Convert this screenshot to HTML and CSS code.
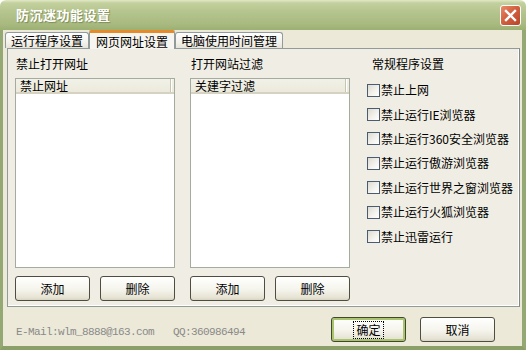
FILE: index.html
```html
<!DOCTYPE html>
<html lang="zh-CN">
<head>
    <meta charset="UTF-8">
    <title>防沉迷功能设置</title>
    <link rel="stylesheet" href="styles.css">
</head>
<body>
    <div class="window">
        <div class="titlebar">
            <span class="title">防沉迷功能设置</span>
            <div class="close-btn">
                <svg width="13" height="13" viewBox="0 0 13 13">
                    <path d="M2 2 L11 11 M11 2 L2 11" stroke="#fff" stroke-width="2.4" stroke-linecap="square"/>
                </svg>
            </div>
        </div>
        <div class="frame">
            <div class="tabs">
                <div class="tab">运行程序设置</div>
                <div class="tab active">网页网址设置</div>
                <div class="tab">电脑使用时间管理</div>
            </div>
            <div class="panel">
                <div class="col">
                    <div class="label">禁止打开网址</div>
                    <div class="listbox">
                        <div class="list-header"><span class="list-col">禁止网址</span></div>
                    </div>
                    <div class="btn-row">
                        <div class="btn">添加</div>
                        <div class="btn">删除</div>
                    </div>
                </div>
                <div class="col">
                    <div class="label">打开网站过滤</div>
                    <div class="listbox">
                        <div class="list-header"><span class="list-col">关建字过滤</span></div>
                    </div>
                    <div class="btn-row">
                        <div class="btn">添加</div>
                        <div class="btn">删除</div>
                    </div>
                </div>
                <div class="options">
                    <div class="label opt-label">常规程序设置</div>
                    <label class="check"><span class="box"></span>禁止上网</label>
                    <label class="check"><span class="box"></span>禁止运行IE浏览器</label>
                    <label class="check"><span class="box"></span>禁止运行360安全浏览器</label>
                    <label class="check"><span class="box"></span>禁止运行傲游浏览器</label>
                    <label class="check"><span class="box"></span>禁止运行世界之窗浏览器</label>
                    <label class="check"><span class="box"></span>禁止运行火狐浏览器</label>
                    <label class="check"><span class="box"></span>禁止迅雷运行</label>
                </div>
            </div>
            <div class="footer">
                <span class="info">E-Mail:wlm_8888@163.com</span>
                <span class="info qq">QQ:360986494</span>
                <div class="btn default"><span class="focus">确定</span></div>
                <div class="btn cancel">取消</div>
            </div>
        </div>
    </div>
</body>
</html>
```

FILE: styles.css
```css
* {
    margin: 0;
    padding: 0;
    box-sizing: border-box;
}

body {
    font-family: "Noto Sans CJK SC", "Liberation Sans", sans-serif;
    font-size: 12px;
    line-height: 14px;
    color: #000;
    background: #fff;
}

.window {
    width: 526px;
    height: 350px;
    display: flex;
    flex-direction: column;
}

.titlebar {
    height: 30px;
    display: flex;
    align-items: center;
    justify-content: space-between;
    padding: 0 5px 0 16px;
    background: linear-gradient(#e2e9c6 0, #c3d09e 3px, #b3c38c 45%, #a9ba80 80%, #9cb072 100%);
    border-radius: 6px 6px 0 0;
}

.title {
    color: #fff;
    font-weight: bold;
    font-size: 13px;
    letter-spacing: 0.5px;
    text-shadow: 1px 1px 1px #7c8c5a;
}

.close-btn {
    width: 21px;
    height: 21px;
    border: 1px solid #fff;
    border-radius: 3px;
    background: linear-gradient(135deg, #e88b6c 0, #d2613f 45%, #b9442a 100%);
    display: flex;
    align-items: center;
    justify-content: center;
}

.frame {
    flex: 1;
    background: #ece9d8;
    border-left: 3px solid #93a872;
    border-right: 4px solid #93a872;
    border-bottom: 4px solid #8aa068;
    display: flex;
    flex-direction: column;
}

.tabs {
    display: flex;
    align-items: flex-end;
    height: 18px;
    margin-left: 2px;
    position: relative;
    z-index: 1;
}

.tab {
    height: 16px;
    line-height: 15px;
    padding: 0 5px;
    border: 1px solid #919b9c;
    border-bottom: none;
    border-radius: 3px 3px 0 0;
    background: linear-gradient(#fefefe, #f3f2ec 60%, #e6e4da);
    margin-right: -1px;
}

.tab.active {
    height: 19px;
    margin-bottom: -1px;
    padding: 0 6px;
    line-height: 17px;
    background: #f6f5ef;
    border-top: 3px solid #e68b2c;
    border-radius: 2px 2px 0 0;
    margin-left: 1px;
    margin-right: 0;
}

.panel {
    height: 259px;
    margin: 0 2px 0 4px;
    border: 1px solid #919b9c;
    border-right: 1px solid #7f8788;
    box-shadow: inset -1px -1px 0 #fff;
    background: #f0eee4;
    display: flex;
    padding-left: 7px;
}

.col {
    width: 160px;
    margin-right: 15px;
    display: flex;
    flex-direction: column;
}

.label {
    margin-top: 8px;
    margin-left: 1px;
    height: 14px;
}

.listbox {
    margin-top: 7px;
    height: 190px;
    border: 1px solid #a5ac9f;
    background: #fff;
}

.list-header {
    height: 15px;
    background: linear-gradient(#f2f1e8, #ebeadb);
    border-bottom: 2px solid #d6d2c2;
    display: flex;
}

.list-col {
    width: 155px;
    padding-left: 4px;
    line-height: 13px;
    border-right: 1px solid #c7c5b2;
    box-shadow: 1px 0 0 #fff;
}

.btn-row {
    display: flex;
    justify-content: space-between;
    margin-top: 8px;
}

.btn {
    width: 75px;
    height: 25px;
    border: 1px solid #4d4d40;
    border-radius: 3px;
    background: linear-gradient(#ffffff, #f5f4ec 55%, #e6e3d4 90%, #d8d4c0);
    display: flex;
    align-items: center;
    justify-content: center;
}

.options {
    margin-left: 2px;
    display: flex;
    flex-direction: column;
}

.opt-label {
    margin-left: 5px;
    margin-bottom: 7px;
}

.check {
    height: 24.4px;
    display: flex;
    align-items: center;
}

.box {
    width: 13px;
    height: 13px;
    border: 1px solid #4c5c70;
    background: linear-gradient(135deg, #dcdbd2, #f4f3ee 60%, #fff);
    margin-right: 1px;
}

.footer {
    flex: 1;
    display: flex;
    align-items: center;
    padding: 6px 0 0 13px;
}

.info {
    margin-top: 5px;
    color: #8a8a8a;
    font-family: "Liberation Mono", monospace;
    font-size: 11px;
    letter-spacing: -0.6px;
}

.qq {
    margin-left: 19px;
}

.btn.default {
    margin-left: auto;
    border: 1px solid #3f4a2c;
    box-shadow: inset 0 0 0 2px #a9c36e;
}

.focus {
    border: 1px dotted #000;
    padding: 1px 2px;
    line-height: 14px;
}

.btn.cancel {
    margin: 0 27px 0 14px;
}
```
